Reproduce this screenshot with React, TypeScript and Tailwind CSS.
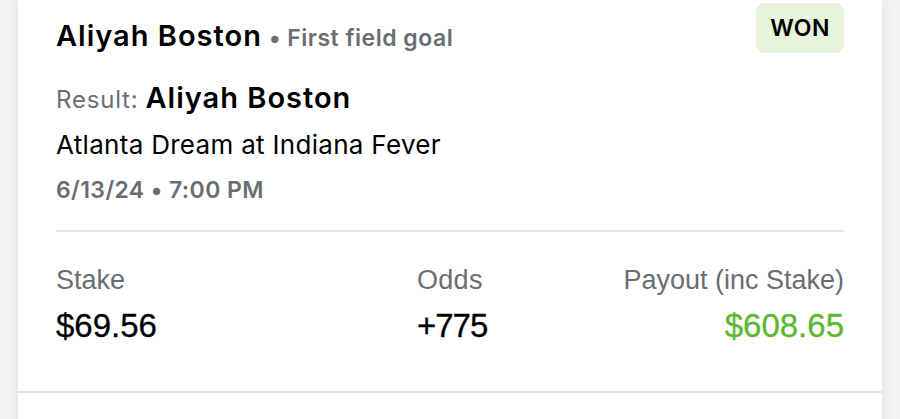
import React from "react";

export default function App() {
  return (
    <div className="h-[419px] w-[900px] overflow-hidden bg-[#f2f2f2] px-[18px]" style={{ fontFamily: "Inter, 'Noto Sans', sans-serif" }}>
      <div className="bg-white shadow-[0_0_12px_rgba(0,0,0,0.08)]">
        <div className="h-[391px] px-[38px] pt-[3px]">
          <div className="flex h-[51px] items-start justify-between">
            <div className="mt-[15px] text-[29px] font-semibold leading-[36px] tracking-[1px] text-black">
              Aliyah Boston
              <span className="ml-[7px] text-[23px] tracking-[0.5px] text-[#6b6d73]">• First field goal</span>
            </div>
            <div className="flex h-[50px] w-[88px] items-center justify-center rounded-[8px] bg-[#e6f4dc] text-[23px] font-semibold tracking-[0.5px] text-black">WON</div>
          </div>
          <div className="mt-[26px] text-[29px] font-semibold leading-[36px] tracking-[1px] text-black">
            <span className="mr-[7px] text-[24px] font-normal tracking-[0.8px] text-[#6b6d73]">Result:</span>
            Aliyah Boston
          </div>
          <div className="mt-[11.4px] text-[26px] leading-[32px] tracking-[0.3px] text-black">Atlanta Dream at Indiana Fever</div>
          <div className="mt-[13.5px] text-[23px] font-semibold leading-[30px] tracking-[0.4px] text-[#6b6d73]">6/13/24 • 7:00 PM</div>
          <div className="mt-[25.6px] h-[2px] bg-[#e4e6e9]" />
          <div className="mt-[31.6px] flex" style={{ fontFamily: "'Liberation Sans', Arial, sans-serif" }}>
            <div className="flex w-[361px] flex-col">
              <span className="text-[27px] leading-[32px] text-[#6b6d73]">Stake</span>
              <span className="mt-[10.4px] text-[33px] leading-[40px] text-black [-webkit-text-stroke:0.3px_currentColor]">$69.56</span>
            </div>
            <div className="flex flex-1 flex-col">
              <span className="text-[27px] leading-[32px] tracking-[0.3px] text-[#6b6d73]">Odds</span>
              <span className="mt-[10.4px] text-[33px] leading-[40px] tracking-[-1px] text-black [-webkit-text-stroke:0.3px_currentColor]">+775</span>
            </div>
            <div className="flex flex-col items-end">
              <span className="text-[27px] leading-[32px] text-[#6b6d73]">Payout (inc Stake)</span>
              <span className="mt-[10.4px] text-[33px] leading-[40px] text-[#5ab82e] [-webkit-text-stroke:0.3px_currentColor]">$608.65</span>
            </div>
          </div>
        </div>
        <div className="h-[2px] bg-[#e4e4e6]" />
        <div className="h-[40px]" />
      </div>
    </div>
  );
}
